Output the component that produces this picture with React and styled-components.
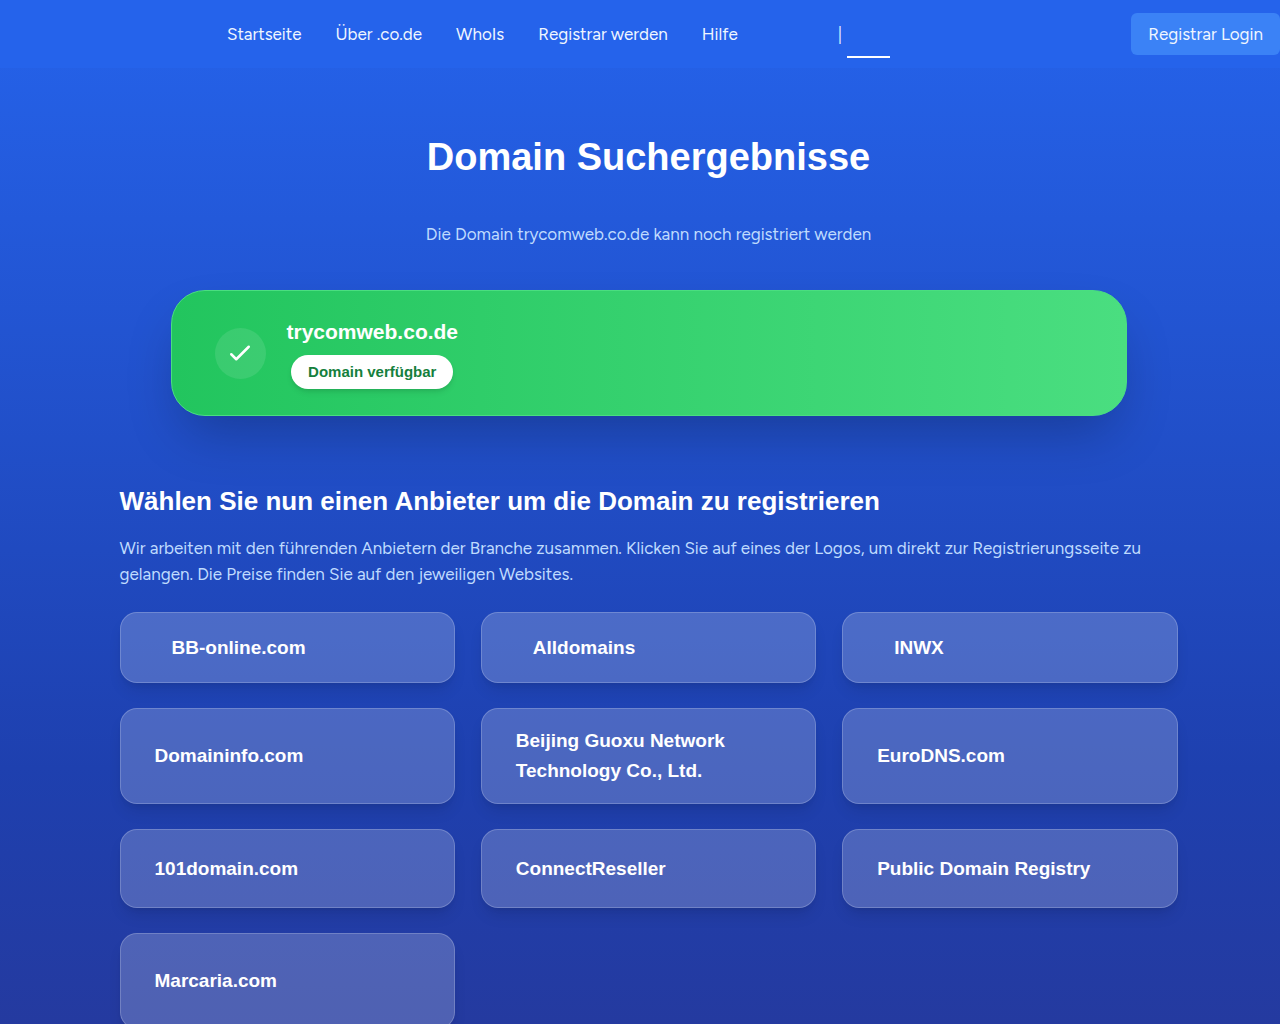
import React from "react";
import styled, { createGlobalStyle } from "styled-components";

const providers = [
  { name: "BB-online.com", logoWidth: 17, logoHeight: 35 },
  { name: "Alldomains", logoWidth: 17, logoHeight: 35 },
  { name: "INWX", logoWidth: 17, logoHeight: 35 },
  { name: "Domaininfo.com", logoHeight: 43 },
  { name: "Beijing Guoxu Network Technology Co., Ltd.", logoHeight: 43 },
  { name: "EuroDNS.com", logoHeight: 43 },
  { name: "101domain.com", logoHeight: 43 },
  { name: "ConnectReseller", logoHeight: 43 },
  { name: "Public Domain Registry", logoHeight: 43 },
  { name: "Marcaria.com", logoHeight: 60 },
];

const App = () => {
  return (
    <React.Fragment>
      <GlobalStyle />
      <Header>
        <Nav>
          <NavLink href="#">Startseite</NavLink>
          <NavLink href="#">Über .co.de</NavLink>
          <NavLink href="#">WhoIs</NavLink>
          <NavLink href="#">Registrar werden</NavLink>
          <NavLink href="#">Hilfe</NavLink>
        </Nav>
        <Languages>
          <span>|</span>
          <ActiveLanguage href="#" aria-label="Deutsch" />
        </Languages>
        <LoginButton type="button">Registrar Login</LoginButton>
      </Header>
      <Main>
        <Title>Domain Suchergebnisse</Title>
        <Subtitle>Die Domain trycomweb.co.de kann noch registriert werden</Subtitle>
        <ResultCard>
          <CheckCircle>
            <svg width="30" height="30" viewBox="0 0 24 24" fill="none" stroke="#fff" strokeWidth="2" strokeLinecap="round" strokeLinejoin="round">
              <path d="M5 13l4 4L19 7" />
            </svg>
          </CheckCircle>
          <ResultText>
            <DomainName>trycomweb.co.de</DomainName>
            <Badge>Domain verfügbar</Badge>
          </ResultText>
        </ResultCard>
        <Section>
          <SectionTitle>Wählen Sie nun einen Anbieter um die Domain zu registrieren</SectionTitle>
          <Intro>
            Wir arbeiten mit den führenden Anbietern der Branche zusammen. Klicken Sie auf eines der Logos, um direkt zur Registrierungsseite zu gelangen. Die Preise finden Sie auf den jeweiligen Websites.
          </Intro>
          <ProviderGrid>
            {providers.map((p) => (
              <ProviderCard href="#" key={p.name}>
                <Logo $width={p.logoWidth} $height={p.logoHeight} />
                <ProviderName>{p.name}</ProviderName>
              </ProviderCard>
            ))}
          </ProviderGrid>
        </Section>
      </Main>
    </React.Fragment>
  );
};

const GlobalStyle = createGlobalStyle`
*{
    box-sizing: border-box;
}
body{
    margin: 0;
    background: #312e81 linear-gradient(to bottom, #2563eb, #1e40af 50%, #312e81) no-repeat;
    background-size: 100% 1536px;
    color: #fff;
    font-family: Figtree, Lato, sans-serif;
    font-size: 17px;
    line-height: 26px;
}
h1, h2, h3, p{
    margin: 0;
}
a{
    color: inherit;
    text-decoration: none;
}
`
const Header = styled.header`
display: flex;
align-items: center;
height: 68px;
padding-left: 227px;
background-color: #2563eb;
`
const Nav = styled.nav`
display: flex;
gap: 34px;
`
const NavLink = styled.a`
white-space: nowrap;
color: #eff6ff;
`
const Languages = styled.div`
display: flex;
align-items: center;
gap: 5px;
height: 48px;
margin-left: 100px;
color: #dbeafe;
`
const ActiveLanguage = styled.a`
align-self: flex-end;
width: 43px;
border-bottom: 2px solid #fff;
`
const LoginButton = styled.button`
margin-left: auto;
padding: 8px 17px;
border: none;
border-radius: 6px;
background-color: #3b82f6;
color: #eff6ff;
font: inherit;
white-space: nowrap;
`
const Main = styled.main`
display: flex;
flex-direction: column;
align-items: center;
padding: 68px 0 68px 17px;
`
const Title = styled.h1`
font-family: "Liberation Sans", Arial, sans-serif;
font-size: 38px;
line-height: 43px;
`
const Subtitle = styled.p`
margin-top: 42px;
color: #bfdbfe;
`
const ResultCard = styled.div`
display: flex;
align-items: center;
gap: 21px;
width: 84%;
max-width: 956px;
height: 126px;
margin-top: 43px;
padding: 0 43px;
border: 1px solid #4ade80;
border-radius: 34px;
background: linear-gradient(to right, #22c55e, #4ade80);
box-shadow: 0 26px 53px -12px rgba(0, 0, 0, 0.25);
`
const CheckCircle = styled.div`
display: flex;
align-items: center;
justify-content: center;
width: 51px;
height: 51px;
border-radius: 50%;
background-color: rgba(255, 255, 255, 0.1);
`
const ResultText = styled.div`
display: flex;
flex-direction: column;
align-items: center;
gap: 8px;
`
const DomainName = styled.h2`
font-family: "Liberation Sans", Arial, sans-serif;
font-size: 21px;
line-height: 30px;
`
const Badge = styled.span`
padding: 4px 17px;
border-radius: 17px;
background-color: #fff;
box-shadow: 0 4px 6px -1px rgba(0, 0, 0, 0.1), 0 2px 4px -2px rgba(0, 0, 0, 0.1);
color: #15803d;
font-family: "Liberation Sans", Arial, sans-serif;
font-size: 15px;
font-weight: bold;
`
const Section = styled.section`
width: 84%;
max-width: 1058px;
margin-top: 68px;
`
const SectionTitle = styled.h2`
font-family: "Liberation Sans", Arial, sans-serif;
font-size: 26px;
line-height: 34px;
`
const Intro = styled.p`
margin: 17px 0 25px;
color: #bfdbfe;
`
const ProviderGrid = styled.div`
display: grid;
grid-template-columns: repeat(3, 1fr);
gap: 25px 26px;
`
const ProviderCard = styled.a`
display: flex;
align-items: center;
gap: 17px;
padding: 17px;
border: 1px solid rgba(255, 255, 255, 0.2);
border-radius: 17px;
background-color: rgba(255, 255, 255, 0.2);
box-shadow: 0 10px 15px -3px rgba(0, 0, 0, 0.1), 0 4px 6px -4px rgba(0, 0, 0, 0.1);
`
const Logo = styled.span`
flex: none;
width: ${(props) => props.$width || 0}px;
height: ${(props) => props.$height}px;
`
const ProviderName = styled.h3`
font-family: "Liberation Sans", Arial, sans-serif;
font-size: 19px;
line-height: 30px;
`
export default App;
